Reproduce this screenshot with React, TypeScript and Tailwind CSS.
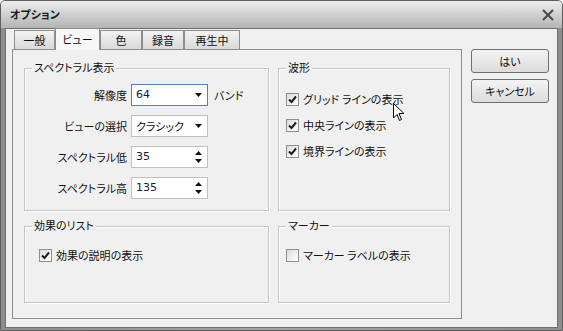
import React from 'react';

const jp = "font-['Noto_Sans_CJK_JP','Noto_Sans',sans-serif] [font-feature-settings:'palt'] text-[11px] leading-none text-[#111111]";

const TABS = [
  { label: '一般', w: 'w-[41px]' },
  { label: 'ビュー', w: 'w-[45px]', active: true },
  { label: '色', w: 'w-[42px]' },
  { label: '録音', w: 'w-[42px]' },
  { label: '再生中', w: 'w-[56px]' },
];

const Group: React.FC<{ title: string; className: string; children?: React.ReactNode }> = ({ title, className, children }) => (
  <div className={`relative border border-[#c5c5c5] shadow-[inset_1px_1px_0_#ffffff,1px_1px_0_#ffffff] ${className}`}>
    <span className={`absolute -top-[7px] left-[7px] bg-[#f0f0f0] px-[2px] ${jp}`}>{title}</span>
    {children}
  </div>
);

const Check: React.FC<{ checked?: boolean; label: string; className?: string }> = ({ checked, label, className = '' }) => (
  <div className={`flex items-center gap-[4px] h-[13px] ${className}`}>
    <div className="w-[13px] h-[13px] border border-[#8f8f8f] bg-gradient-to-br from-[#dcdcdc] to-[#ffffff] flex items-center justify-center">
      {checked && (
        <svg width="9" height="9" viewBox="0 0 9 9">
          <path d="M1 4.5 L3.5 7 L8 1.5" fill="none" stroke="#1c1c1c" strokeWidth="2" />
        </svg>
      )}
    </div>
    <span className={jp}>{label}</span>
  </div>
);

const Arrow: React.FC<{ up?: boolean }> = ({ up }) => (
  <svg width="7" height="4" viewBox="0 0 7 4">
    <path d={up ? 'M0 4 L3.5 0 L7 4 Z' : 'M0 0 L7 0 L3.5 4 Z'} fill="#111111" />
  </svg>
);

const Field: React.FC<{ label: string; value: string; kind: 'combo' | 'spin'; focus?: boolean; jpValue?: boolean; suffix?: string }> = ({ label, value, kind, focus, jpValue, suffix }) => (
  <div className="flex items-center h-[22px]">
    <div className={`w-[102px] text-right ${jp}`}>{label}</div>
    <div
      className={`ml-[4px] w-[77px] h-[22px] bg-white border flex items-center justify-between pl-[4px] pr-[5px] ${
        focus ? 'border-[#5a7fb8]' : 'border-[#c0c0c0]'
      }`}
    >
      <span className={jpValue ? jp : "font-['DejaVu_Sans',sans-serif] text-[11px] text-[#1a1a30]"}>{value}</span>
      {kind === 'combo' ? (
        <Arrow />
      ) : (
        <div className="flex flex-col gap-[4px]">
          <Arrow up />
          <Arrow />
        </div>
      )}
    </div>
    {suffix && <span className={`ml-[6px] ${jp}`}>{suffix}</span>}
  </div>
);

export default function App() {
  return (
    <div className="relative w-[563px] h-[331px] flex flex-col bg-gradient-to-r from-[#8e8e8e] via-[#a4a4a4] to-[#8e8e8e] border border-[#5e5e5e] rounded-t-[5px] overflow-hidden">
      {/* title bar */}
      <div className="h-[27px] shrink-0 flex items-center justify-between pl-[9px] pr-[7px] bg-gradient-to-b from-[#eeeeee] to-[#b4b4b4]">
        <span className="font-['Noto_Sans_CJK_JP',sans-serif] [font-feature-settings:'palt'] font-bold text-[11px] text-[#1a1a1a]">オプション</span>
        <svg width="14" height="14" viewBox="0 0 14 14">
          <path d="M2 2 L12 12 M12 2 L2 12" stroke="#4a4a4a" strokeWidth="2" />
        </svg>
      </div>

      {/* client area */}
      <div className="flex-1 mx-[4px] mb-[2px] bg-[#f0f0f0] border border-[#6f6f6f] flex">
        {/* tab control */}
        <div className="ml-[6px] flex flex-col">
          <div className="h-[20px] flex items-end pl-[2px]">
            {TABS.map((t) =>
              t.active ? (
                <div
                  key={t.label}
                  className={`${t.w} relative z-10 -mb-[1px] h-[22px] bg-[#f7f7f7] border border-b-0 border-[#8c8e94] flex items-center justify-center ${jp}`}
                >
                  {t.label}
                </div>
              ) : (
                <div
                  key={t.label}
                  className={`${t.w} h-[19px] bg-gradient-to-b from-[#f3f3f3] to-[#d9d9d9] border border-b-0 border-[#8c8e94] flex items-center justify-center ${jp}`}
                >
                  {t.label}
                </div>
              )
            )}
          </div>
          <div className="w-[450px] h-[270px] border border-[#8c8e94] bg-[#f0f0f0] pl-[11px] pt-[18px] flex gap-[9px]">
            <div className="flex flex-col gap-[15px]">
              <Group title="スペクトラル表示" className="w-[245px] h-[143px] pt-[15px] flex flex-col gap-[9px]">
                <Field label="解像度" value="64" kind="combo" focus suffix="バンド" />
                <Field label="ビューの選択" value="クラシック" kind="combo" jpValue />
                <Field label="スペクトラル低" value="35" kind="spin" />
                <Field label="スペクトラル高" value="135" kind="spin" />
              </Group>
              <Group title="効果のリスト" className="w-[245px] h-[77px] pt-[22px] pl-[14px]">
                <Check checked label="効果の説明の表示" />
              </Group>
            </div>
            <div className="flex flex-col gap-[15px]">
              <Group title="波形" className="w-[172px] h-[143px] pt-[24px] pl-[7px] flex flex-col gap-[13px]">
                <Check checked label="グリッド ラインの表示" />
                <Check checked label="中央ラインの表示" />
                <Check checked label="境界ラインの表示" />
              </Group>
              <Group title="マーカー" className="w-[172px] h-[77px] pt-[22px] pl-[7px]">
                <Check label="マーカー ラベルの表示" />
              </Group>
            </div>
          </div>
        </div>

        {/* buttons */}
        <div className="ml-[9px] mt-[20px] flex flex-col gap-[6px]">
          {['はい', 'キャンセル'].map((b) => (
            <div
              key={b}
              className={`w-[78px] h-[24px] rounded-[3px] border border-[#707070] bg-gradient-to-b from-[#f4f4f4] to-[#dcdcdc] flex items-center justify-center ${jp}`}
            >
              {b}
            </div>
          ))}
        </div>
      </div>

      {/* mouse pointer */}
      <svg className="absolute left-[392px] top-[102px]" width="12" height="19" viewBox="0 0 12 19">
        <path d="M0.5 0.5 L0.5 15 L4 11.5 L6.5 17.5 L8.5 16.5 L6 10.5 L11 10.5 Z" fill="#ffffff" stroke="#000000" strokeWidth="1" />
      </svg>
    </div>
  );
}
